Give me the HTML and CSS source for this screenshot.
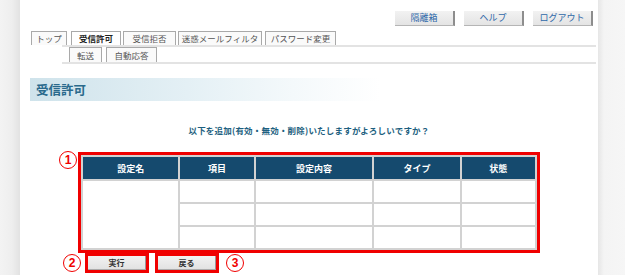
FILE: index.html
```html
<!DOCTYPE html>
<html lang="ja">
<head>
    <meta charset="UTF-8">
    <title>受信許可</title>
    <link rel="stylesheet" href="styles.css">
</head>
<body>
    <div class="page">
        <div class="side side-left"></div>
        <div class="content">
            <div class="top-buttons">
                <a class="top-btn">隔離箱</a>
                <a class="top-btn">ヘルプ</a>
                <a class="top-btn">ログアウト</a>
            </div>

            <div class="tabs">
                <span class="tab t-top">トップ</span>
                <span class="tab t-allow active">受信許可</span>
                <span class="tab t-deny">受信拒否</span>
                <span class="tab t-filter">迷惑メールフィルタ</span>
                <span class="tab t-pass">パスワード変更</span>
            </div>
            <div class="subtabs">
                <span class="tab t-fwd">転送</span>
                <span class="tab t-auto">自動応答</span>
            </div>

            <h2 class="heading">受信許可</h2>

            <p class="message">以下を追加(有効・無効・削除)いたしますがよろしいですか？</p>

            <div class="table-box">
                <span class="mark mark-1">1</span>
                <table class="list">
                    <tr>
                        <th class="c1">設定名</th>
                        <th class="c2">項目</th>
                        <th class="c3">設定内容</th>
                        <th class="c4">タイプ</th>
                        <th class="c5">状態</th>
                    </tr>
                    <tr>
                        <td rowspan="3"></td>
                        <td></td><td></td><td></td><td></td>
                    </tr>
                    <tr><td></td><td></td><td></td><td></td></tr>
                    <tr><td></td><td></td><td></td><td></td></tr>
                </table>
            </div>

            <div class="actions">
                <span class="mark">2</span>
                <span class="btn-box"><button class="btn">実行</button></span>
                <span class="btn-box"><button class="btn">戻る</button></span>
                <span class="mark">3</span>
            </div>
        </div>
        <div class="side side-right"></div>
    </div>
</body>
</html>
```

FILE: styles.css
```css
body {
    margin: 0;
    font-family: "Noto Sans CJK JP", "DejaVu Sans", sans-serif;
    background: #f5f5f5;
}
.page {
    display: flex;
    height: 275px;
    overflow: hidden;
}
.side-left {
    width: 20px;
    background: linear-gradient(to right, #f3f3f3, #eeeeee 60%, #e2e2e2);
}
.side-right {
    width: 27px;
    background: linear-gradient(to right, #e6e6e6, #f4f4f4 6px, #f6f6f6);
}
.content {
    width: 578px;
    background: #fff;
}

/* top links */
.top-buttons {
    display: flex;
    justify-content: flex-end;
    gap: 9px;
    padding: 11px 5px 0 0;
}
.top-btn {
    width: 58px;
    height: 14px;
    line-height: 14px;
    text-align: center;
    font-size: 9px;
    color: #2f68a8;
    background: linear-gradient(#f2f2f2, #e4e4e4);
    border-right: 2px solid #8d8d8d;
    border-bottom: 1px solid #b5b5b5;
}

/* tabs */
.tabs {
    display: flex;
    gap: 2px;
    margin-top: 5px;
    padding-left: 11px;
    height: 14px;
}
.tab {
    box-sizing: border-box;
    height: 14px;
    line-height: 12px;
    padding: 0;
    text-align: center;
    white-space: nowrap;
    font-size: 8.5px;
    color: #555;
    background: #fafafa;
    border: 1px solid #a9a9a9;
    border-bottom: none;
}
.tab.active {
    font-weight: bold;
    color: #222;
    background: #fff;
}
.t-top { width: 36px; margin-right: 2px; }
.t-allow { width: 50px; }
.t-deny { width: 53px; }
.t-filter { width: 84px; }
.t-pass { width: 71px; margin-left: 1px; }

.subtabs {
    display: flex;
    gap: 4px;
    margin-left: 42px;
    margin-right: 2px;
    padding-left: 7px;
    border-top: 2px solid #e3e3e3;
    border-bottom: 2px solid #e3e3e3;
    height: 15px;
}
.subtabs .tab {
    height: 15px;
    line-height: 14px;
}
.t-fwd { width: 33px; }
.t-auto { width: 51px; }

/* section heading */
.heading {
    margin: 14px 0 0 10px;
    width: 344px;
    height: 23px;
    line-height: 23px;
    padding-left: 6px;
    font-size: 12.5px;
    font-weight: bold;
    color: #2a6a8c;
    background: linear-gradient(to right, #cfe3eb, #e4f0f5 45%, #f4f9fb 75%, #fff);
}

.message {
    margin: 23px 0 0;
    text-align: center;
    font-size: 8.5px;
    font-weight: bold;
    letter-spacing: 0.2px;
    color: #1d5f80;
}

/* table */
.table-box {
    position: relative;
    width: 456px;
    margin: 16px auto 0;
    border: 3px solid #f00000;
}
.list {
    width: 456px;
    border-spacing: 2px;
    background: #d2d2d2;
    table-layout: fixed;
}
.list th,
.list td {
    height: 21px;
    padding: 0;
    background: #fff;
}
.list th {
    height: 22px;
    background: #154a6e;
    color: #fff;
    font-size: 9px;
    font-weight: bold;
}
.c1 { width: 95px; }
.c2 { width: 73px; }
.c3 { width: 116px; }
.c4 { width: 85px; }
.c5 { width: 73px; }

.mark {
    display: inline-block;
    width: 16px;
    height: 16px;
    line-height: 16px;
    border: 1.5px solid #f00000;
    border-radius: 50%;
    text-align: center;
    font-family: "Liberation Sans", sans-serif;
    font-size: 12px;
    font-weight: bold;
    color: #f00000;
    background: #fff;
}
.mark-1 {
    position: absolute;
    left: -22px;
    top: -4px;
}

/* action buttons */
.actions {
    display: flex;
    align-items: center;
    gap: 4px;
    margin-left: 43px;
}
.actions .mark:last-child {
    margin-left: 1px;
}
.btn-box {
    border: 3px solid #f00000;
    margin-right: 2px;
}
.btn {
    display: block;
    width: 58px;
    height: 14px;
    padding: 0;
    font-family: inherit;
    font-size: 8px;
    font-weight: bold;
    color: #333;
    background: linear-gradient(#f2f2f2, #e2e2e2);
    border: none;
    border-right: 1px solid #999;
    border-bottom: 1px solid #aaa;
}
```
